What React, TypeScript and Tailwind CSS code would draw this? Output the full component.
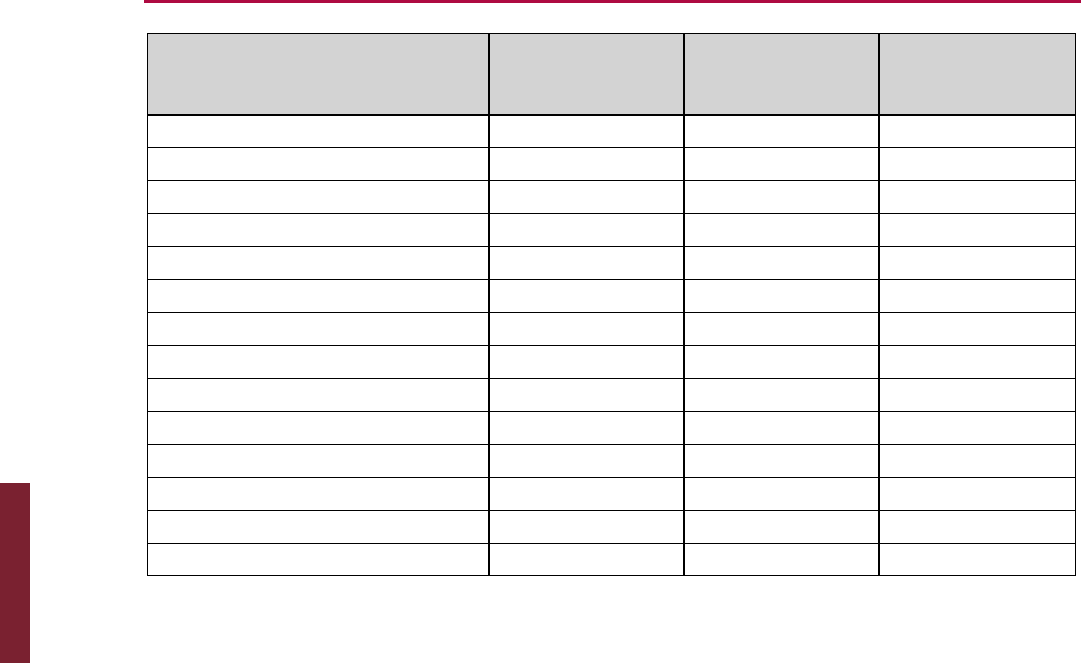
const ROWS = 14;
const COLS = [0, 1, 2, 3];

function Cell({ col }: { col: number }) {
  return <div className={col === 0 ? "" : "border-l-2 border-black"} />;
}

function rowClass(i: number) {
  if (i === 0) return "grid h-[32px] grid-cols-[340px_195px_195px_197px] border-b border-black";
  if (i === ROWS - 1) return "grid h-[31px] grid-cols-[340px_195px_195px_197px]";
  return "grid h-[33px] grid-cols-[340px_195px_195px_197px] border-b border-black";
}

export default function App() {
  return (
    <div className="flex h-[663px] w-full bg-white" style={{ fontFamily: '"Liberation Sans", Arial, sans-serif' }}>
      {/* left rail */}
      <div className="flex w-[144px] shrink-0 flex-col justify-end">
        <div className="h-[180px] w-[30px] bg-[#7a2130]" />
      </div>

      <div className="flex flex-1 flex-col">
        <div className="h-[3px] w-full bg-[#ae0a41]" />

        <div className="ml-[3px] mt-[30px] w-[929px] border border-black">
          <div className="grid h-[82px] grid-cols-[340px_195px_195px_197px] border-b-2 border-black bg-[#d3d3d3]">
            {COLS.map((c) => (
              <Cell key={c} col={c} />
            ))}
          </div>
          {Array.from({ length: ROWS }).map((_, i) => (
            <div key={i} className={rowClass(i)}>
              {COLS.map((c) => (
                <Cell key={c} col={c} />
              ))}
            </div>
          ))}
        </div>
      </div>
    </div>
  );
}
